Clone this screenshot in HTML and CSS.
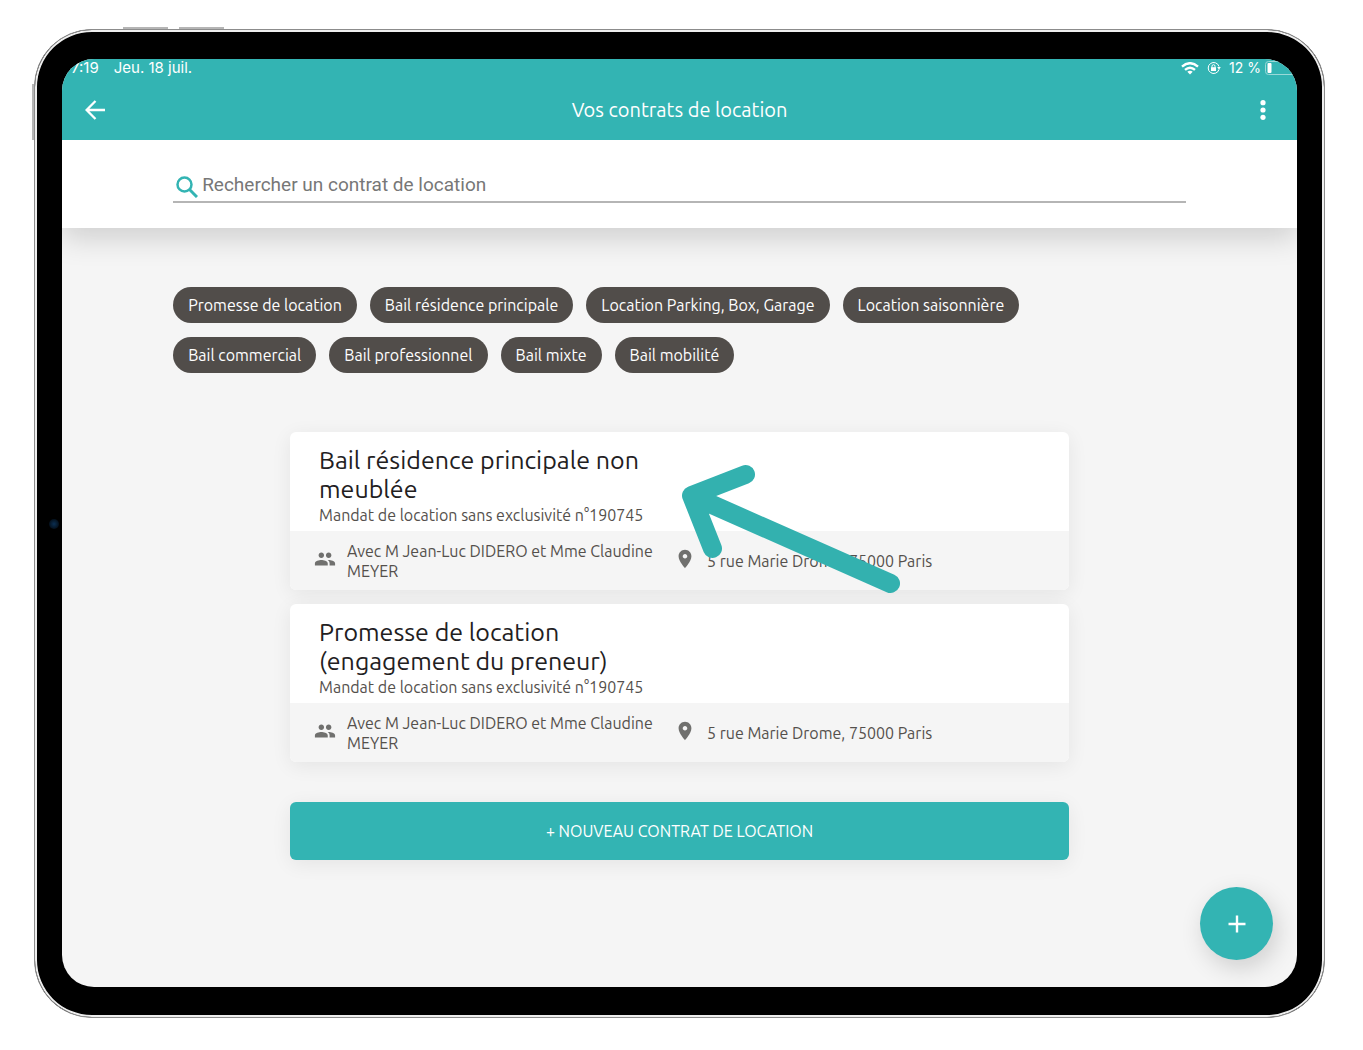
FILE: index.html
```html
<!DOCTYPE html>
<html lang="fr">
<head>
<meta charset="utf-8">
<meta name="viewport" content="width=device-width, initial-scale=1">
<title>Vos contrats de location</title>
<link rel="stylesheet" href="styles.css">
</head>
<body>
<svg class="sprite" aria-hidden="true">
  <symbol id="icon-people" viewBox="0 0 24 24"><path d="M16 11c1.66 0 2.99-1.34 2.99-3S17.66 5 16 5s-3 1.34-3 3 1.34 3 3 3zm-8 0c1.66 0 2.99-1.34 2.99-3S9.66 5 8 5 5 6.34 5 8s1.34 3 3 3zm0 2c-2.33 0-7 1.17-7 3.5V19h14v-2.500C15 14.170 10.330 13 8 13zm8 0c-.29 0-.62.02-.97.050 1.160.84 1.970 1.970 1.970 3.450V19h6v-2.500c0-2.330-4.670-3.500-7-3.500z"/></symbol>
  <symbol id="icon-place" viewBox="0 0 24 24"><path d="M12 2C8.130 2 5 5.130 5 9c0 5.250 7 13 7 13s7-7.750 7-13c0-3.870-3.130-7-7-7zm0 9.500c-1.380 0-2.500-1.120-2.500-2.500s1.120-2.500 2.500-2.500 2.500 1.120 2.500 2.500-1.120 2.500-2.500 2.500z"/></symbol>
</svg>
<div class="device">
  <span class="device-button volume-up"></span>
  <span class="device-button volume-down"></span>
  <span class="device-button power"></span>
  <span class="camera"></span>
  <div class="screen">
    <header class="app-header">
      <div class="status-bar">
        <span class="clock">7:19</span>
        <span class="date">Jeu. 18 juil.</span>
        <span class="status-icons">
          <svg width="18" height="13" viewBox="0 0 18 13" fill="none" stroke="#fff" stroke-width="2.400"><path d="M1 4.600Q9-2.200 17 4.600M4 7.900Q9 3.500 14 7.900"/><path d="M6.300 9.800Q9 7.700 11.700 9.800L9 12.600Z" fill="#fff" stroke="none"/></svg>
          <svg class="lock" width="14" height="14" viewBox="0 0 14 14" fill="none" stroke="#fff"><path d="M12 8.500A5.500 5.500 0 1 1 12 5.500"/><path d="M10.200 6h3.600L12 8.700z" fill="#fff" stroke="none"/><rect x="4" y="6.200" width="5" height="3.800" fill="#fff" stroke="none"/><path d="M5 6.500V5.200a1.500 1.500 0 0 1 3 0v1.300"/></svg>
          <span class="battery-level">12 %</span>
          <svg width="32" height="14" viewBox="0 0 32 14"><rect x=".5" y=".5" width="34" height="13" rx="3" fill="none" stroke="#9ad9d8"/><rect x="2.500" y="2" width="4" height="10" rx="1" fill="#fff"/></svg>
        </span>
      </div>
      <div class="toolbar">
        <button class="icon-button" type="button" aria-label="Retour"><svg width="20" height="20" viewBox="0 0 20 20" fill="none" stroke="#fff" stroke-width="2.300"><path d="M20 10H2M10.500 1L1.600 10l8.900 9"/></svg></button>
        <h1 class="page-title">Vos contrats de location</h1>
        <button class="icon-button menu-button" type="button" aria-label="Menu"><svg width="6" height="20" viewBox="0 0 6 20" fill="#fff"><circle cx="3" cy="2.700" r="2.600"/><circle cx="3" cy="10" r="2.600"/><circle cx="3" cy="17.300" r="2.600"/></svg></button>
      </div>
    </header>
    <div class="search-panel">
      <label class="search-field">
        <svg width="22" height="22" viewBox="0 0 22 22" fill="none" stroke="#33b4b3"><circle cx="8.500" cy="8.500" r="7" stroke-width="2.500"/><path d="M13.500 13.500L21 21" stroke-width="3"/></svg>
        <input class="search-input" type="text" placeholder="Rechercher un contrat de location" aria-label="Rechercher un contrat de location">
      </label>
    </div>
    <main class="content">
      <div class="chips">
        <button class="chip" type="button">Promesse de location</button>
        <button class="chip" type="button">Bail résidence principale</button>
        <button class="chip" type="button">Location Parking, Box, Garage</button>
        <button class="chip" type="button">Location saisonnière</button>
        <button class="chip" type="button">Bail commercial</button>
        <button class="chip" type="button">Bail professionnel</button>
        <button class="chip" type="button">Bail mixte</button>
        <button class="chip" type="button">Bail mobilité</button>
      </div>
      <div class="contracts">
        <article class="card">
          <div class="card-head">
            <h2 class="card-title">Bail résidence principale non meublée</h2>
            <p class="card-mandate">Mandat de location sans exclusivité n°190745</p>
          </div>
          <div class="card-foot">
            <svg class="card-icon" width="22" height="22"><use href="#icon-people"/></svg>
            <p class="card-parties">Avec M Jean-Luc DIDERO et Mme Claudine MEYER</p>
            <svg class="card-icon" width="22" height="22"><use href="#icon-place"/></svg>
            <p class="card-address">5 rue Marie Drome, 75000 Paris</p>
          </div>
          <svg class="pointer" width="220" height="130" viewBox="0 0 220 130" fill="none" stroke="#33b1af" stroke-width="19" stroke-linecap="round" stroke-linejoin="round" aria-hidden="true"><path d="M65.500 10.500L11.500 31.500L32.500 84.500M11.500 31.500L210.500 119.500"/></svg>
        </article>
        <article class="card">
          <div class="card-head">
            <h2 class="card-title">Promesse de location (engagement du preneur)</h2>
            <p class="card-mandate">Mandat de location sans exclusivité n°190745</p>
          </div>
          <div class="card-foot">
            <svg class="card-icon" width="22" height="22"><use href="#icon-people"/></svg>
            <p class="card-parties">Avec M Jean-Luc DIDERO et Mme Claudine MEYER</p>
            <svg class="card-icon" width="22" height="22"><use href="#icon-place"/></svg>
            <p class="card-address">5 rue Marie Drome, 75000 Paris</p>
          </div>
        </article>
        <button class="new-contract" type="button">+ NOUVEAU CONTRAT DE LOCATION</button>
      </div>
    </main>
    <button class="fab" type="button" aria-label="Ajouter"><svg width="18" height="18" viewBox="0 0 18 18" stroke="#fff" stroke-width="2.400"><path d="M9 .5v17M.5 9h17"/></svg></button>
  </div>
</div>
</body>
</html>
```
FILE: styles.css
```css
* { box-sizing: border-box; }

body {
  margin: 0;
  padding: 29px 38px 32px 34px;
  background: #fff;
  font-family: Ubuntu, "Noto Sans", "Open Sans", sans-serif;
  color: #54504c;
}

h1, h2, p { margin: 0; font-weight: 400; }

button, input { font: inherit; border: 0; padding: 0; margin: 0; background: none; }

svg { display: block; flex: none; }

.sprite { position: absolute; width: 0; height: 0; }

.device {
  position: relative;
  display: flex;
  min-height: calc(100vh - 61px);
  padding: 29px 27px 30px;
  border: 1px solid #8c8c8c;
  border-radius: 58px;
  background: #000;
  box-shadow: inset 0 0 0 2px #eee;
}

.device-button { position: absolute; background: #b5b5b5; }
.volume-up, .volume-down { top: -3px; width: 45px; height: 2px; }
.volume-up { left: 88px; }
.volume-down { left: 144px; }
.power { left: -3px; top: 54px; width: 2px; height: 56px; }

.camera {
  position: absolute;
  left: 14px;
  top: 489px;
  width: 10px;
  height: 10px;
  border-radius: 50%;
  background: radial-gradient(#0b2f52, #04101c 70%);
}

.screen {
  position: relative;
  flex: 1;
  overflow: hidden;
  border-radius: 32px;
  background: #f5f5f5;
}

.app-header {
  position: relative;
  z-index: 1;
  background: #33b4b3;
  color: #fff;
}

.status-bar {
  display: flex;
  align-items: center;
  height: 18px;
  padding-left: 9px;
  font: 15px/18px Inter, sans-serif;
}

.date { margin-left: 15px; }
.status-icons { display: flex; align-items: center; margin-left: auto; }
.lock { margin: 0 8px; }
.battery-level { margin-right: 4px; font-size: 14px; }

.toolbar {
  display: grid;
  grid-template-columns: 1fr auto 1fr;
  align-items: center;
  height: 63px;
  padding: 2px 23px 0;
}

.icon-button { justify-self: start; }
.menu-button { justify-self: end; margin-right: 8px; }
.page-title { font-size: 20px; line-height: 28px; }

.search-panel {
  position: relative;
  height: 88px;
  padding: 26px 9% 0;
  background: #fff;
  box-shadow: 0 10px 28px rgba(0, 0, 0, .16);
}

.search-field {
  display: flex;
  align-items: center;
  height: 37px;
  gap: 4px;
  padding-left: 3px;
  border-bottom: 2px solid #b5b5b5;
}

.search-field svg { margin-top: 6px; }

.search-input {
  flex: 1;
  min-width: 0;
  height: 32px;
  padding-top: 2px;
  font: 19px/30px Roboto, sans-serif;
  outline: 0;
}

.search-input::placeholder { color: #777; opacity: 1; }

.content { padding: 59px 9% 126px; }

.chips { display: flex; flex-wrap: wrap; gap: 14px 13px; padding-right: 14px; }

.chip {
  height: 36px;
  padding: 0 15px;
  border-radius: 18px;
  background: #514d4a;
  color: #fff;
  font-size: 16px;
  line-height: 36px;
}

.contracts {
  display: flex;
  flex-direction: column;
  gap: 14px;
  max-width: 779px;
  margin: 59px auto 0;
}

.card {
  position: relative;
  border-radius: 6px;
  background: #fff;
  box-shadow: 0 4px 20px rgba(0, 0, 0, .07);
  font-size: 16px;
  line-height: 20px;
}

.card-head { padding: 14px 29px 6px; }

.card-title {
  max-width: 340px;
  margin-bottom: 1px;
  color: #22201e;
  font-size: 25px;
  line-height: 29px;
}

.card-foot {
  display: flex;
  align-items: center;
  padding: 10px 24px 9px;
  border-radius: 0 0 6px 6px;
  background: #f5f5f5;
}

.card-icon { margin-bottom: 4px; fill: #70706e; }
.card-parties { width: 313px; margin: 0 14px 0 11px; }
.card-address { margin-left: 11px; }

.pointer { position: absolute; left: 390px; top: 32px; z-index: 1; }

.new-contract {
  height: 58px;
  margin-top: 26px;
  border-radius: 6px;
  background: #33b4b3;
  box-shadow: 0 4px 20px rgba(0, 0, 0, .07);
  color: #fff;
  font-size: 16px;
}

.fab {
  position: absolute;
  right: 24px;
  bottom: 27px;
  display: grid;
  place-items: center;
  width: 73px;
  height: 73px;
  border-radius: 50%;
  background: #33b4b3;
  box-shadow: 4px 8px 24px rgba(0, 0, 0, .16);
}
```
